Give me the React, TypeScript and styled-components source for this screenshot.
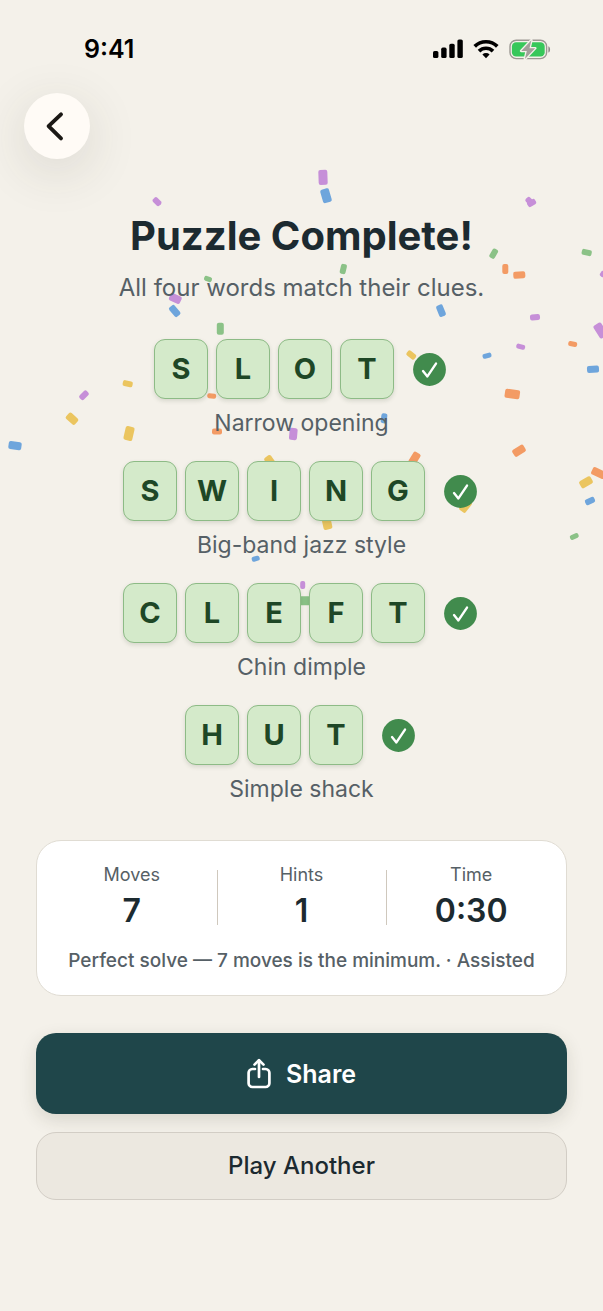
import React from "react";
import styled, { createGlobalStyle } from "styled-components";

const color = {
  page: "#f4f1ea",
  ink: "#1c2a30",
  muted: "#566066",
  leaf: "#8bc287",
  sky: "#6ea5dc",
  plum: "#c68fd8",
  coral: "#f39b64",
  honey: "#ebc55f",
};

const GlobalStyle = createGlobalStyle`
  *, *::before, *::after { box-sizing: border-box; }
  body {
    margin: 0;
    background: ${color.page};
    color: ${color.ink};
    font-family: Inter, "Liberation Sans", sans-serif;
  }
  h1, p, dl, dd, dt, ul { margin: 0; padding: 0; }
  button { font: inherit; cursor: pointer; }
`;

const Screen = styled.div`
  position: relative;
  min-height: 100vh;
  overflow: hidden;
  background: ${color.page};
`;

const ConfettiLayer = styled.svg`
  position: absolute;
  top: 0;
  left: 0;
  width: 100%;
  height: 620px;
  pointer-events: none;
`;

const Content = styled.div`
  position: relative;
  display: flex;
  flex-direction: column;
`;

const StatusBar = styled.header`
  display: flex;
  align-items: center;
  justify-content: space-between;
  height: 93px;
  padding: 5px 52px 0 84px;
`;

const Clock = styled.time`
  font-size: 25px;
  line-height: 28px;
  font-weight: 600;
  color: #000;
`;

const StatusIcons = styled.div`
  display: flex;
  align-items: center;
  gap: 10px;
`;

const TopBar = styled.nav`
  display: flex;
  padding: 0 24px;
`;

const BackButton = styled.button`
  display: grid;
  place-items: center;
  width: 66px;
  height: 66px;
  padding: 0;
  border: 0;
  border-radius: 50%;
  background: #fffbf6;
  box-shadow: 0 12px 52px rgba(60, 60, 40, 0.14);
`;

const Main = styled.main`
  display: flex;
  flex-direction: column;
  padding: 52px 36px 36px;
`;

const Title = styled.h1`
  font-size: 40px;
  line-height: 50px;
  font-weight: 700;
  text-align: center;
`;

const Intro = styled.p`
  margin-top: 12px;
  font-size: 24px;
  line-height: 30px;
  text-align: center;
  color: ${color.muted};
`;

const WordList = styled.ul`
  display: flex;
  flex-direction: column;
  gap: 23px;
  margin-top: 36px;
  list-style: none;
`;

const WordItem = styled.li`
  display: flex;
  flex-direction: column;
  gap: 9px;
`;

const WordRow = styled.div`
  display: flex;
  align-items: center;
  justify-content: center;
  gap: 19px;
  padding-right: 3px;
`;

const Tiles = styled.div`
  display: flex;
  gap: 8px;
`;

const Tile = styled.span`
  display: grid;
  place-items: center;
  width: 54px;
  height: 60px;
  border: 1px solid #8dbb86;
  border-radius: 11px;
  background: #d4eaca;
  box-shadow: 0 2px 4px rgba(60, 80, 50, 0.16);
  font-size: 29px;
  line-height: 36px;
  font-weight: 700;
  color: #1e4726;
`;

const Clue = styled.p`
  font-size: 23px;
  line-height: 30px;
  text-align: center;
  color: ${color.muted};
`;

const StatsCard = styled.section`
  display: flex;
  flex-direction: column;
  gap: 18px;
  margin-top: 36px;
  padding: 23px 10px 22px;
  border: 1px solid #e0dcd3;
  border-radius: 25px;
  background: #fff;
`;

const Stats = styled.dl`
  display: grid;
  grid-template-columns: repeat(3, 1fr);
`;

const Stat = styled.div`
  position: relative;
  display: flex;
  flex-direction: column;
  align-items: center;
  gap: 5px;

  & + &::before {
    content: "";
    position: absolute;
    top: 6px;
    bottom: 6px;
    left: 0;
    width: 1px;
    background: #cfc8bd;
  }
`;

const StatLabel = styled.dt`
  font-size: 18px;
  line-height: 22px;
  color: ${color.muted};
`;

const StatValue = styled.dd`
  font-size: 32px;
  line-height: 40px;
  font-weight: 600;
`;

const Note = styled.p`
  font-size: 19px;
  line-height: 24px;
  font-weight: 500;
  text-align: center;
  white-space: nowrap;
  color: ${color.muted};
`;

const Actions = styled.div`
  display: flex;
  flex-direction: column;
  gap: 18px;
  margin-top: 37px;
`;

const ActionButton = styled.button<{ $primary?: boolean }>`
  display: flex;
  align-items: center;
  justify-content: center;
  gap: 15px;
  height: ${(p) => (p.$primary ? 81 : 68)}px;
  padding: 0 20px;
  border: ${(p) => (p.$primary ? "0" : "1px solid #d2cdc5")};
  border-radius: 20px;
  background: ${(p) => (p.$primary ? "#1f464a" : "#ece8e0")};
  box-shadow: ${(p) => (p.$primary ? "0 6px 18px rgba(50, 50, 30, 0.14)" : "none")};
  color: ${(p) => (p.$primary ? "#fff" : color.ink)};
  font-size: ${(p) => (p.$primary ? 25 : 24)}px;
  line-height: 32px;
  font-weight: ${(p) => (p.$primary ? 600 : 500)};
`;

type Piece = [x: number, y: number, w: number, h: number, angle: number, fill: string];

const { leaf, sky, plum, coral, honey } = color;

const pieces: Piece[] = [
  [323, 177.3, 9, 15, -2, plum],
  [326, 195.7, 9, 14, -16, sky],
  [157, 201.7, 9, 6, 45, plum],
  [343.3, 269, 6, 10, 13, leaf],
  [208, 279, 8, 5, 20, leaf],
  [175.3, 298.5, 12, 8, 25, plum],
  [174.7, 311, 12, 7, 50, sky],
  [220.3, 328.7, 7, 12, 0, leaf],
  [529.8, 201.3, 9, 6, 45, plum],
  [531.6, 203, 9, 6, -30, plum],
  [493.7, 253.7, 6, 10, 30, leaf],
  [586.7, 252.5, 10, 6, 12, leaf],
  [505.3, 269, 6, 10, 0, coral],
  [519.3, 275, 12, 7, -4, coral],
  [604.5, 275, 9, 6, 30, plum],
  [441, 310.7, 7, 12, -22, sky],
  [535, 317.3, 10, 6, -5, plum],
  [600.5, 330.5, 9, 15, -32, plum],
  [127.7, 383.7, 10, 6, 12, honey],
  [84, 395.3, 10, 6, -45, plum],
  [72, 418.7, 12, 8, 42, honey],
  [129, 433.5, 9, 14, 13, honey],
  [15, 445.7, 13, 8, 8, sky],
  [211.7, 396, 9, 5, 8, coral],
  [217, 431.5, 10, 6, 0, coral],
  [255.7, 558.7, 8, 5, -15, sky],
  [411.3, 355, 10, 6, 38, honey],
  [384, 418.3, 6, 10, 8, sky],
  [293.3, 434, 8, 12, 5, plum],
  [269.8, 461, 11, 8, 55, honey],
  [414.5, 458.5, 8, 13, 32, coral],
  [327, 523, 9, 13, -12, honey],
  [520.7, 346.7, 9, 5, 15, plum],
  [572.7, 344, 9, 5, 10, coral],
  [487, 355.7, 9, 5, -15, sky],
  [593, 369.3, 12, 7, -3, sky],
  [512.3, 394, 15, 9, 8, coral],
  [519, 450.7, 13, 8, -32, coral],
  [598.5, 473, 14, 8, 25, coral],
  [586, 482.3, 13, 8, -30, honey],
  [590, 501, 10, 6, -25, sky],
  [574.3, 536.5, 9, 5, -25, leaf],
  [465.5, 506, 8, 13, 38, honey],
  [302.7, 585, 5, 8, 0, plum],
  [305, 600.7, 14, 9, 0, leaf],
];

const words = [
  { word: "SLOT", clue: "Narrow opening" },
  { word: "SWING", clue: "Big-band jazz style" },
  { word: "CLEFT", clue: "Chin dimple" },
  { word: "HUT", clue: "Simple shack" },
];

const stats = [
  { label: "Moves", value: "7" },
  { label: "Hints", value: "1" },
  { label: "Time", value: "0:30" },
];

const Confetti = () => (
  <ConfettiLayer viewBox="0 0 603 620" preserveAspectRatio="xMidYMin slice" aria-hidden="true">
    {pieces.map(([x, y, w, h, angle, fill], i) => (
      <rect
        key={i}
        x={x - w / 2}
        y={y - h / 2}
        width={w}
        height={h}
        rx={2}
        fill={fill}
        transform={`rotate(${angle} ${x} ${y})`}
      />
    ))}
  </ConfettiLayer>
);

const SignalIcon = () => (
  <svg width="30" height="20" viewBox="0 0 30 20" aria-hidden="true">
    <rect x="0" y="12" width="5.4" height="7" rx="1.6" />
    <rect x="8.2" y="8.6" width="5.4" height="10.4" rx="1.6" />
    <rect x="16.3" y="4.8" width="5.4" height="14.2" rx="1.6" />
    <rect x="24.4" y="0.4" width="5.4" height="18.6" rx="1.6" />
  </svg>
);

const WifiIcon = () => (
  <svg width="26" height="20" viewBox="0 0 26 20" fill="none" stroke="#000" strokeWidth="3.7" aria-hidden="true">
    <path d="M1.7 7.4a16 16 0 0 1 22.6 0" />
    <path d="M6 12.100a10 10 0 0 1 14 0" />
    <path d="M13 19.300l-3.600-3.700a5.100 5.100 0 0 1 7.200 0z" fill="#000" stroke="none" />
  </svg>
);

const BatteryIcon = () => (
  <svg width="42" height="21" viewBox="0 0 42 21" aria-hidden="true">
    <rect x="1" y="1.2" width="36.600" height="18.400" rx="6.200" fill="none" stroke="#9b9892" strokeWidth="1.400" />
    <path d="M39.400 7.200c2.200.7 2.200 5.700 0 6.400z" fill="#8c8a86" />
    <rect x="2.900" y="3.200" width="32.800" height="14.400" rx="4.200" fill="#37c75a" />
    <path
      d="M22.400 1.200L12.200 11.900h5.600l-1.900 8.200L26.200 9.200h-5.700z"
      fill="#a39f9b"
      stroke={color.page}
      strokeWidth="2.600"
      strokeLinejoin="round"
      paintOrder="stroke"
    />
  </svg>
);

const ChevronIcon = () => (
  <svg width="66" height="66" viewBox="0 0 66 66" fill="none" aria-hidden="true">
    <path d="M37 21.4L24.6 33.2L37 45.4" stroke="#1b1815" strokeWidth="3.9" strokeLinecap="round" strokeLinejoin="round" />
  </svg>
);

const CheckIcon = () => (
  <svg width="33" height="33" viewBox="0 0 33 33" fill="none" role="img" aria-label="Solved">
    <circle cx="16.5" cy="16.5" r="16.4" fill="#418b4d" />
    <path d="M10 18.1L14.4 23.4L23 10.6" stroke="#fff" strokeWidth="2.4" strokeLinecap="round" strokeLinejoin="round" />
  </svg>
);

const ShareIcon = () => (
  <svg
    width="24"
    height="31"
    viewBox="0 0 24 31"
    fill="none"
    stroke="#fff"
    strokeWidth="2.7"
    strokeLinecap="round"
    strokeLinejoin="round"
    aria-hidden="true"
  >
    <path d="M8 11H5.400a3.800 3.800 0 0 0-3.800 3.800v10.400A3.800 3.800 0 0 0 5.400 29h13.200a3.800 3.800 0 0 0 3.800-3.800V14.800A3.800 3.800 0 0 0 18.600 11H16" />
    <path d="M12 19V2.400" />
    <path d="M7.500 6.600l4.500-4.500l4.500 4.500" />
  </svg>
);

export default function App() {
  return (
    <Screen>
      <GlobalStyle />
      <Confetti />
      <Content>
        <StatusBar>
          <Clock>9:41</Clock>
          <StatusIcons>
            <SignalIcon />
            <WifiIcon />
            <BatteryIcon />
          </StatusIcons>
        </StatusBar>
        <TopBar>
          <BackButton type="button" aria-label="Back">
            <ChevronIcon />
          </BackButton>
        </TopBar>
        <Main>
          <Title>Puzzle Complete!</Title>
          <Intro>All four words match their clues.</Intro>
          <WordList>
            {words.map(({ word, clue }) => (
              <WordItem key={word}>
                <WordRow>
                  <Tiles>
                    {word.split("").map((letter, i) => (
                      <Tile key={i}>{letter}</Tile>
                    ))}
                  </Tiles>
                  <CheckIcon />
                </WordRow>
                <Clue>{clue}</Clue>
              </WordItem>
            ))}
          </WordList>
          <StatsCard>
            <Stats>
              {stats.map(({ label, value }) => (
                <Stat key={label}>
                  <StatLabel>{label}</StatLabel>
                  <StatValue>{value}</StatValue>
                </Stat>
              ))}
            </Stats>
            <Note>Perfect solve — 7 moves is the minimum. · Assisted</Note>
          </StatsCard>
          <Actions>
            <ActionButton type="button" $primary>
              <ShareIcon />
              Share
            </ActionButton>
            <ActionButton type="button">Play Another</ActionButton>
          </Actions>
        </Main>
      </Content>
    </Screen>
  );
}
